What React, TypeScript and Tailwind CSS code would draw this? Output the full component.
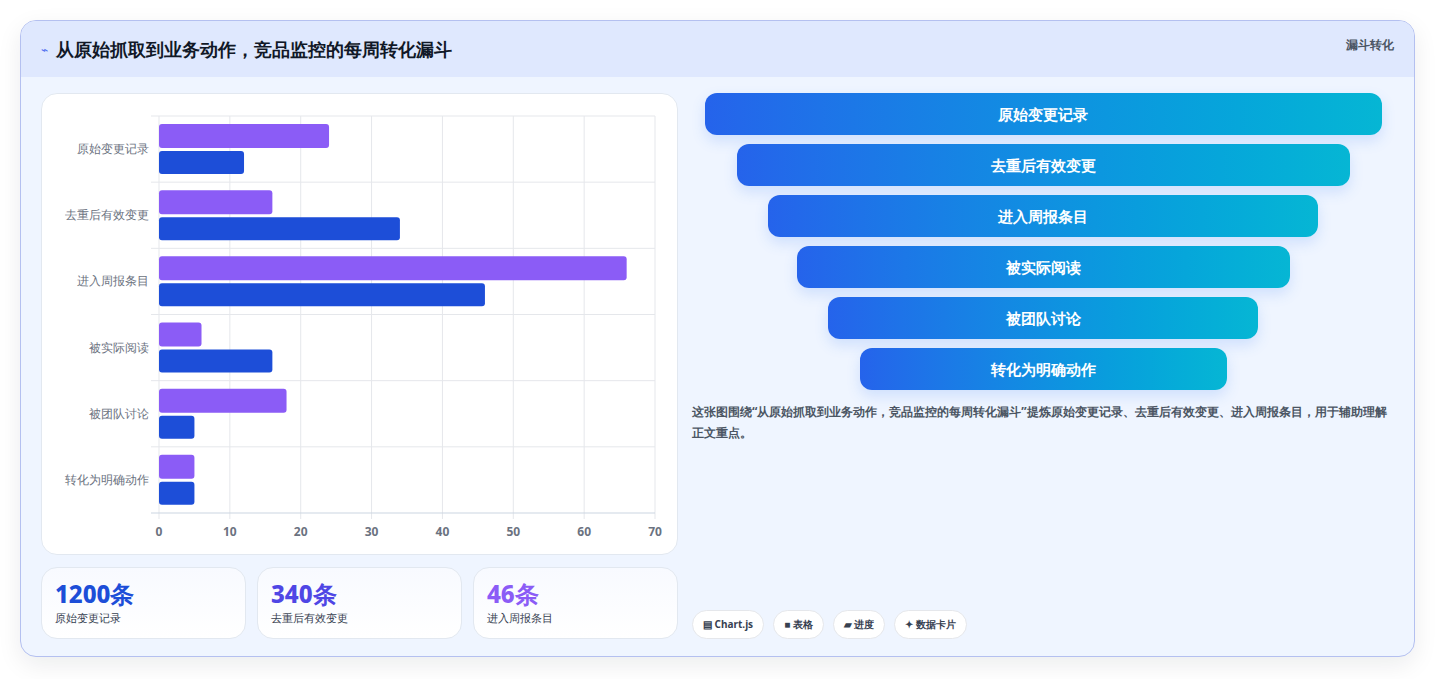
const cats = ['原始变更记录', '去重后有效变更', '进入周报条目', '被实际阅读', '被团队讨论', '转化为明确动作']
const purple = [24, 16, 66, 6, 18, 5]
const blue = [12, 34, 46, 16, 5, 5]
const funnel = [677, 613, 550, 493, 430, 367]
const stats = [
  { v: '1200条', l: '原始变更记录', c: 'text-[#1d4ed8]' },
  { v: '340条', l: '去重后有效变更', c: 'text-[#4f46e5]' },
  { v: '46条', l: '进入周报条目', c: 'text-[#8b5cf6]' },
]
const tags = ['▤ Chart.js', '■ 表格', '▰ 进度', '✦ 数据卡片']

function Chart() {
  const x0 = 117
  const x1 = 613
  const y0 = 22
  const y1 = 419
  const band = (y1 - y0) / 6
  const sx = (v: number) => x0 + (v / 70) * (x1 - x0)
  return (
    <svg width="637" height="461" className="block">
      {[0, 10, 20, 30, 40, 50, 60, 70].map((t) => (
        <g key={t}>
          <line x1={sx(t)} x2={sx(t)} y1={y0} y2={y1 + 6} stroke="#e5e7eb" />
          <text x={sx(t)} y={442} textAnchor="middle" fontSize="12" fontWeight="700" fill="#6b7280">{t}</text>
        </g>
      ))}
      {[0, 1, 2, 3, 4, 5, 6].map((i) => (
        <line key={i} x1={x0 - 8} x2={x1} y1={y0 + i * band} y2={y0 + i * band} stroke={i === 6 ? '#cbd5e1' : '#e5e7eb'} />
      ))}
      {cats.map((c, i) => (
        <g key={c}>
          <text x={107} y={y0 + i * band + 37} textAnchor="end" fontSize="12" fill="#6b7280">{c}</text>
          <rect x={x0} y={y0 + i * band + 8} width={sx(purple[i]) - x0} height={24} rx="3" fill="#8b5cf6" />
          <rect x={x0} y={y0 + i * band + 35} width={sx(blue[i]) - x0} height={23} rx="3" fill="#1d4ed8" />
        </g>
      ))}
    </svg>
  )
}

export default function App() {
  return (
    <div className="min-h-[679px] w-[1435px] bg-white p-5 font-['Noto_Sans_CJK_SC','Noto_Sans',sans-serif]">
      <div className="h-[637px] overflow-hidden rounded-2xl border border-[#b4c0f0] bg-[#eff5ff] shadow-[0_8px_24px_rgba(15,23,42,0.08)]">
        <div className="flex h-[56px] items-start justify-between bg-[#dfe8fe] px-5">
          <div className="flex items-center gap-2 pt-[15px]">
            <span className="text-[12px] text-[#4f6ef0]">⌁</span>
            <h1 className="text-[18px] font-bold text-[#111827]">从原始抓取到业务动作，竞品监控的每周转化漏斗</h1>
          </div>
          <span className="pt-[15px] text-[12px] font-bold text-[#4b5563]">漏斗转化</span>
        </div>
        <div className="flex gap-[14px] px-5 pt-4">
          <div className="w-[637px] shrink-0">
            <div className="h-[462px] rounded-2xl border border-[#e2e8f0] bg-white">
              <Chart />
            </div>
            <div className="mt-3 grid grid-cols-3 gap-[11px]">
              {stats.map((s) => (
                <div key={s.l} className="h-[72px] rounded-2xl border border-[#e2e8f0] bg-gradient-to-b from-[#f8faff] to-white px-[13px] pt-[10px]">
                  <div className={`text-[24px] font-extrabold leading-[32px] ${s.c}`}>{s.v}</div>
                  <div className="text-[11px] text-[#374151]">{s.l}</div>
                </div>
              ))}
            </div>
          </div>
          <div className="flex h-[546px] flex-1 flex-col">
            <div className="flex flex-col items-center gap-[9px]">
              {funnel.map((w, i) => (
                <div key={w} style={{ width: w }} className="flex h-[42px] items-center justify-center rounded-xl bg-gradient-to-r from-[#2563eb] to-[#06b6d4] text-[15px] font-bold text-white shadow-[0_6px_14px_rgba(59,130,246,0.18)]">
                  {cats[i]}
                </div>
              ))}
            </div>
            <p className="mt-[11px] text-[12px] font-bold leading-[21px] text-[#4b5563]">
              这张图围绕“从原始抓取到业务动作，竞品监控的每周转化漏斗”提炼原始变更记录、去重后有效变更、进入周报条目，用于辅助理解正文重点。
            </p>
            <div className="mt-auto flex gap-[9px]">
              {tags.map((t) => (
                <span key={t} className="rounded-full border border-[#e5e7eb] bg-white px-[10px] py-[6px] text-[10px] font-bold text-[#374151]">{t}</span>
              ))}
            </div>
          </div>
        </div>
      </div>
    </div>
  )
}
